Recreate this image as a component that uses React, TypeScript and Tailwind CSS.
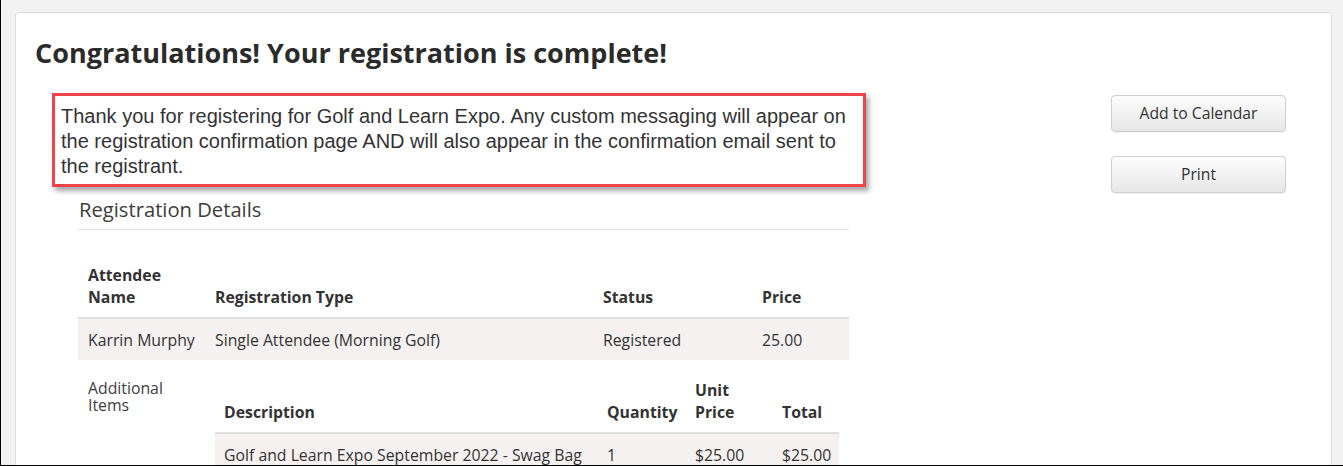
import React from 'react';

const openSans = "font-['Open_Sans',sans-serif]";

function Button({ label }: { label: string }) {
  return (
    <button className="h-[37px] w-[175px] rounded-[4px] border border-[#cfcfcf] bg-gradient-to-b from-[#fdfdfd] to-[#e6e6e6] text-[15.7px] text-[#333] shadow-[0_1px_1px_rgba(0,0,0,0.06)]">
      {label}
    </button>
  );
}

export default function App() {
  return (
    <div className={`h-[466px] w-[1343px] overflow-hidden border-b border-l border-black bg-[#f2f2f2] ${openSans}`}>
      <div className="ml-[14px] mt-[12px] h-[480px] w-[1317px] rounded-[4px] border border-[#dcdcdc] bg-white px-[19px] pt-[24px]">
        <h1 className="text-[27px] font-bold leading-[32px] text-[#2b2b2b]">
          Congratulations! Your registration is complete!
        </h1>

        <div className="mt-[24px] flex">
          {/* left column */}
          <div className="w-[834px] pl-[17px]">
            <div className="w-[814px] border-[3px] border-[#f2434a] bg-white pb-[5px] pl-[6px] pr-[4px] pt-[8px] font-['Liberation_Sans',Arial,sans-serif] text-[20px] leading-[25px] text-[#333] shadow-[3px_4px_5px_rgba(0,0,0,0.35)]">
              Thank you for registering for Golf and Learn Expo. Any custom messaging will appear on the registration
              confirmation page AND will also appear in the confirmation email sent to the registrant.
            </div>

            <div className="ml-[26px] w-[771px]">
              <h3 className="mt-[8px] border-b border-[#e5e5e5] pb-[6px] pl-[1px] text-[20.2px] leading-[28px] text-[#3d3d3d]">
                Registration Details
              </h3>

              <div className="mt-[34px] grid grid-cols-[127px_388px_159px_97px] border-b-2 border-[#dedede] pb-[9px] text-[15.8px] font-bold leading-[22px] text-[#333]">
                <div className="px-[10px]">Attendee Name</div>
                <div className="self-end px-[10px]">Registration Type</div>
                <div className="self-end px-[10px]">Status</div>
                <div className="self-end px-[10px]">Price</div>
              </div>

              <div className="grid h-[41px] grid-cols-[127px_388px_159px_97px] items-center bg-[#f6f1f1] text-[15.8px] leading-[22px] text-[#333]">
                <div className="px-[10px]">Karrin Murphy</div>
                <div className="px-[10px]">Single Attendee (Morning Golf)</div>
                <div className="px-[10px]">Registered</div>
                <div className="px-[10px]">25.00</div>
              </div>

              <div className="flex">
                <div className="w-[127px] px-[10px] pt-[20px] text-[15.8px] leading-[17px] text-[#3d3d3d]">
                  Additional Items
                </div>
                <div className="w-[644px] px-[10px] pt-[19px]">
                  <div className="grid grid-cols-[383px_88px_87px_67px] border-b-2 border-[#dedede] pb-[9px] text-[15.8px] font-bold leading-[22px] text-[#333]">
                    <div className="self-end px-[9px]">Description</div>
                    <div className="self-end px-[9px]">Quantity</div>
                    <div className="px-[9px]">Unit Price</div>
                    <div className="self-end px-[9px]">Total</div>
                  </div>
                  <div className="grid h-[41px] grid-cols-[383px_88px_87px_67px] items-center bg-[#f6f1f1] text-[15.8px] leading-[22px] text-[#333]">
                    <div className="whitespace-nowrap px-[9px]">Golf and Learn Expo September 2022 - Swag Bag</div>
                    <div className="px-[9px]">1</div>
                    <div className="px-[9px]">$25.00</div>
                    <div className="px-[9px]">$25.00</div>
                  </div>
                </div>
              </div>
            </div>
          </div>

          {/* right column */}
          <div className="ml-auto mr-[26px] flex flex-col gap-[24px] pt-[2px]">
            <Button label="Add to Calendar" />
            <Button label="Print" />
          </div>
        </div>
      </div>
    </div>
  );
}
